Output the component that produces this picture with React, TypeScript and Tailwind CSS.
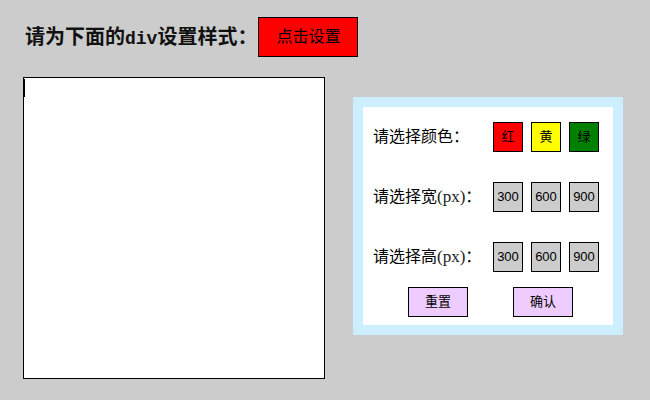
const colorOptions = [
  { label: "红", cls: "bg-[#ff0000]" },
  { label: "黄", cls: "bg-[#ffff00]" },
  { label: "绿", cls: "bg-[#008000]" },
];

const sizes = ["300", "600", "900"];

const OptionRow = ({ label, children }: { label: React.ReactNode; children: React.ReactNode }) => (
  <div className="flex h-[30px] items-center">
    <span className="w-[120px] whitespace-nowrap text-[16px] text-black">{label}</span>
    <div className="flex gap-[8px]">{children}</div>
  </div>
);

const SmallBox = ({ className, children }: { className: string; children: React.ReactNode }) => (
  <button
    className={`flex size-[30px] items-center justify-center border border-black text-[13px] text-black ${className}`}
  >
    {children}
  </button>
);

const Px = () => <span className="text-[17px] text-[#222]">(px)</span>;

export default function App() {
  return (
    <div
      className="h-[400px] w-[650px] bg-[#cccccc] pl-[23px] pt-[17px]"
      style={{ fontFamily: '"Liberation Serif", "Noto Sans CJK SC", serif' }}
    >
      <div className="flex items-center">
        <h1 className="ml-[2px] whitespace-nowrap text-[20px] font-bold text-[#111]">
          请为下面的<span className="font-[Liberation_Mono] text-[18px]">div</span>设置样式：
        </h1>
        <button className="ml-px h-[40px] w-[100px] border border-black bg-[#ff0000] text-[16px] text-black">
          点击设置
        </button>
      </div>

      <div className="mt-[20px] flex items-start">
        <div className="h-[302px] w-[302px] border border-black bg-white">
          <div className="mt-[1px] h-[18px] w-px bg-black" />
        </div>

        <div className="ml-[28px] mt-[20px] w-[270px] border-[10px] border-[#cceeff] bg-white">
          <div className="flex flex-col gap-[30px] pl-[10px] pt-[15px]">
            <OptionRow label="请选择颜色：">
              {colorOptions.map((c) => (
                <SmallBox key={c.label} className={c.cls}>
                  {c.label}
                </SmallBox>
              ))}
            </OptionRow>
            <OptionRow label={<>请选择宽<Px />：</>}>
              {sizes.map((s) => (
                <SmallBox key={s} className="bg-[#cccccc] font-[Liberation_Sans]">
                  {s}
                </SmallBox>
              ))}
            </OptionRow>
            <OptionRow label={<>请选择高<Px />：</>}>
              {sizes.map((s) => (
                <SmallBox key={s} className="bg-[#cccccc] font-[Liberation_Sans]">
                  {s}
                </SmallBox>
              ))}
            </OptionRow>
          </div>
          <div className="mt-[15px] mb-[8px] flex gap-[45px] pl-[45px]">
            <button className="h-[30px] w-[60px] border border-black bg-[#eeccff] text-[13px] text-black">
              重置
            </button>
            <button className="h-[30px] w-[60px] border border-black bg-[#eeccff] text-[13px] text-black">
              确认
            </button>
          </div>
        </div>
      </div>
    </div>
  );
}
